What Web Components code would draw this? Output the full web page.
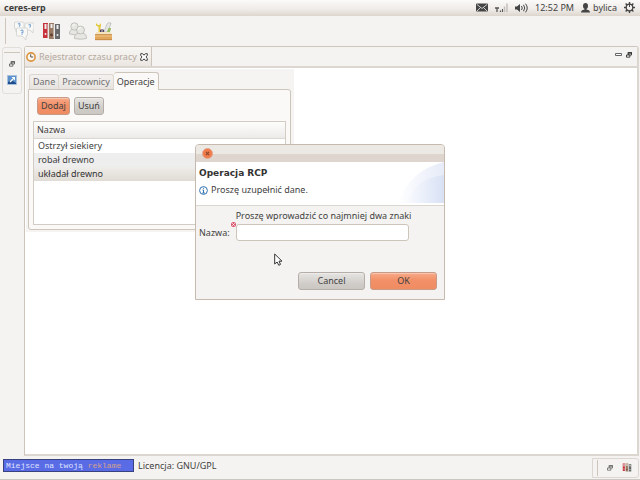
<!DOCTYPE html>
<html lang="pl">
<head>
<meta charset="utf-8">
<meta name="viewport" content="width=device-width, initial-scale=1">
<title>ceres-erp</title>
<style>
html,body{height:100%}
body{margin:0;background:#f4f3f1;color:#424242;font:9px/14px "Noto Sans","Open Sans",sans-serif;
--line:#cdc4ba;--soft:#dcd6d0;--accent:linear-gradient(#f8aa88,#f29068 45%,#f08c62);--plain:linear-gradient(#e6e4e1,#cfccc8 70%,#cbc7c3)}
</style>
</head>
<body>
<ceres-app></ceres-app>
<script>
const define = (name, html, setup) => customElements.define(name, class extends HTMLElement {
  constructor() {
    super();
    const t = document.createElement('template');
    t.innerHTML = '<style>*{box-sizing:border-box}:host{box-sizing:border-box}svg{display:block;flex:none}button,input{font:inherit;color:inherit;margin:0}button.bare{display:flex;align-items:center;border:0;padding:0;background:none}</style>' + html;
    this.attachShadow({mode: 'open'}).append(t.content.cloneNode(true));
  }
  connectedCallback() { if (setup) setup(this, this.shadowRoot); }
});

const binders = '<path d="M1 1h5v15H1z" fill="#c8323a"/><path d="M7 1h5v16H7z" fill="#9b7a63"/><path d="M13 2h5v15h-5z" fill="#68696a"/><path d="M2.500 2h2v5h-2zM8.500 2h2v4h-2zM14.500 3h2v4h-2z" fill="#eee"/><circle cx="3.500" cy="12" r="1" fill="#eee"/><circle cx="9.500" cy="13" r="1.400" fill="#5b4030"/><circle cx="15.500" cy="13" r="1" fill="#eee"/><path d="M6 2v14M12 2v14" stroke="#ddd"/>';
const icons = {
  chat: [20, 20, '<g fill="#f8f8f7" stroke="#cfd0ce" stroke-width=".8"><path d="M2 1h7q1 0 1 1v5q0 1-1 1H5L2 11V8Q.500 8 .500 7V2Q.500 1 2 1z"/><path d="M12 2h7q1 0 1 1v5q0 1-1 1v3l-3-3h-4q-1 0-1-1V3q0-1 1-1z"/><path d="M3.500 7h9q1 0 1 1v6q0 1-1 1H12v4l-4-4H3.500q-1 0-1-1V8q0-1 1-1z"/></g><g fill="none" stroke="#79a5d0" stroke-width="1.100"><path d="M4 3q2-1 2 .5T5 5.500M14.500 4q2-1 2 .5T15.500 6.500M6.500 9.500q3-1 2.500 1T8 12v.5M8 13.300v.8"/></g>'],
  binders: [19, 18, binders],
  people: [18, 18, '<g fill="#e6e6e3" stroke="#b8b8b4" stroke-width=".8"><path d="M.500 12q-.5-5 5.500-5t6 5q-6 1.500-11.500 0z"/><circle cx="5.500" cy="4.500" r="3.700"/><path d="M5.500 16.500q-.5-5.500 6-5.500t6 5.500q-6 1.500-12 0z"/><circle cx="11.500" cy="8" r="4"/></g><path d="M9.500 7.500q0-2 2-2M4 4q0-1.500 1.500-1.500" stroke="#fff" fill="none"/>'],
  tools: [18, 19, '<path d="M3.500 10V5L1 3.500V1L3 3h1.500L6 1v3L5.500 5v5z" fill="#e5c93d"/><path d="M9 10l3-8q1-2 4-1l-3 9z" fill="#e6e6e4" stroke="#aaa" stroke-width=".6"/><path d="M12 10l1.500-4h2.500l-1 4z" fill="#96b957"/><path d="M5 8q2-2 4 0v3H5z" fill="#54425d"/><path d="M7 7v4" stroke="#eee" stroke-width=".8"/><path d="M1.500 10h14l1.500 3H0z" fill="#f5e3bd"/><path d="M0 12.500h17V18H0z" fill="#e2a75c"/><path d="M0 12.700h17M0 17.700h17" stroke="#bc8340" stroke-width=".8"/><path d="M0 14h17" stroke="#f0c586"/>'],
  clock: [10, 10, '<circle cx="5" cy="5" r="4.100" fill="#fcf7ef" stroke="#dc9440" stroke-width="1.600"/><path d="M4.700 2.300V5H7.200" fill="none" stroke="#555"/>'],
  closeTab: [8, 8, '<path d="M.700.700h2L4 2.200 5.300.700h2v1.600L6 4l1.300 1.700v1.600h-2L4 5.800 2.700 7.300h-2V5.700L2 4 .700 2.300z" fill="#fff" stroke="#444" stroke-width="1"/>'],
  restore: [7, 7, '<path d="M2.500 1h4v2.500h-4z" fill="none" stroke="currentColor"/><path d="M2 1h5" stroke="currentColor" stroke-width="1.400"/><path d="M.500 3.500h4V6h-4z" fill="#fff" stroke="currentColor"/>'],
  minimize: [7, 4, '<path d="M.500 .500h6v2h-6z" fill="#fff" stroke="#666"/>'],
  shortcut: [10, 10, '<path d="M.500.500h9v9h-9z" fill="#5b90cc" stroke="#a9c0da"/><path d="M1 7l3-2 5 3v1H1z" fill="#1d4c8c"/><path d="M3 7l3-3" stroke="#fff" stroke-width="1.500"/><path d="M4.500 2H8v3.500z" fill="#fff"/>'],
  mail: [12, 9, '<rect y=".500" width="12" height="8" rx="1" fill="#454545"/><path d="M1 1.500l5 4 5-4M1 8l3.500-3.500M11 8L7.500 4.500" fill="none" stroke="#eee" stroke-width=".8"/>'],
  signal: [13, 10, '<path d="M0 5h4M2 5v4M5.500 7.500V9" stroke="#555" stroke-width="1.300"/><path d="M7.500 6v3" stroke="#555"/><path d="M9.500 3.500V9M12 .500V9" stroke="#c3c0bc" stroke-width="1.500"/>'],
  sound: [13, 10, '<path d="M0 3.500h2L5 1v8L2 6.500H0z" fill="#444"/><path d="M6.500 3q1.500 2 0 4M8.500 1.800q2.500 3.200 0 6.400M10.500 .700q3.500 4.300 0 8.600" stroke="#444" fill="none"/>'],
  user: [9, 10, '<ellipse cx="4.500" cy="3" rx="2.500" ry="3" fill="#444"/><path d="M3.500 5h2v1.500Q9 7 9 9.500H0Q0 7 3.500 6.500z" fill="#444"/>'],
  gear: [11, 11, '<circle cx="5.500" cy="5.500" r="3.300" fill="none" stroke="#444" stroke-width="1.200"/><path d="M5.500 0v2.500M5.500 8.500V11M0 5.500h2.500M8.500 5.500H11M1.600 1.600l1.700 1.700M7.700 7.700l1.700 1.700M9.400 1.600L7.700 3.300M3.300 7.700L1.600 9.400" stroke="#444" stroke-width="1.400"/><path d="M5.500 2v3" stroke="#444"/>'],
  info: [9, 9, '<circle cx="4.500" cy="4.500" r="3.900" fill="#fff" stroke="#3272ae"/><path d="M4.500 1.800v1M3.500 4h1v3M3.300 7h2.500" stroke="#3272ae" fill="none"/>'],
  error: [5, 5, '<circle cx="2.500" cy="2.500" r="2.500" fill="#d9546a"/><path d="M1.200 1.200l2.600 2.600M3.800 1.200L1.200 3.800" stroke="#fff" stroke-width=".8"/>'],
  closeWin: [11, 11, '<circle cx="5.500" cy="5.500" r="5" fill="#f07c4c" stroke="#dfa48c" stroke-width=".8"/><path d="M3.900 3.900l3.200 3.200M7.100 3.900L3.900 7.100" stroke="#8a4629" stroke-width="1.100"/>'],
  cursor: [9, 13, '<path d="M.700 1v10l2.400-2 1.700 3.300 1.700-.9L5 8.200h3z" fill="#fff" stroke="#333"/>']
};
define('ui-icon', '<style>:host{display:inline-block;flex:none}</style>', (el, root) => {
  if (root.querySelector('svg')) return;
  const [w, h, body] = icons[el.getAttribute('name')];
  const width = el.getAttribute('width') || w;
  root.innerHTML += `<svg width="${width}" height="${Math.round(h * width / w)}" viewBox="0 0 ${w} ${h}" aria-hidden="true">${body}</svg>`;
});

define('ui-button', `<style>
:host{display:inline-flex}
button{width:100%;height:18px;padding:0 3px;line-height:14px;border:1px solid #b5aea8;border-radius:3px;background:var(--plain);box-shadow:inset 0 1px #ffffff55}
:host([primary]) button{background:var(--accent);border-color:#c69a86}
</style><button type="button"><slot></slot></button>`);

define('top-panel', `<style>
:host{display:flex;align-items:center;height:16px;padding:0 5px 1px 4px;background:linear-gradient(#fbfaf9,#eeebe7 60%,#ddd5ce)}
b{flex:1;color:#3c3c3c}
nav{display:flex;align-items:center;gap:7px}
button.bare{gap:3px;line-height:14px}
</style><b>ceres-erp</b><nav>
<button class="bare" aria-label="Mail"><ui-icon name="mail"></ui-icon></button>
<button class="bare" aria-label="Network"><ui-icon name="signal"></ui-icon></button>
<button class="bare" aria-label="Sound"><ui-icon name="sound"></ui-icon></button>
<button class="bare">12:52 PM</button>
<button class="bare"><ui-icon name="user"></ui-icon>bylica</button>
<button class="bare" aria-label="System"><ui-icon name="gear"></ui-icon></button></nav>`);

define('tool-bar', `<style>
:host{display:flex;align-items:center;gap:8px;height:30px;padding:0 5px}
i{width:1px;height:26px;background:var(--line)}
</style><i></i>
<button class="bare" aria-label="Pomoc"><ui-icon name="chat"></ui-icon></button>
<button class="bare" aria-label="Dokumenty"><ui-icon name="binders"></ui-icon></button>
<button class="bare" aria-label="Pracownicy"><ui-icon name="people"></ui-icon></button>
<button class="bare" aria-label="Narzędzia"><ui-icon name="tools"></ui-icon></button>`);

define('fast-views', `<style>
:host{display:block;padding:1px 2px}
div{display:flex;flex-direction:column;align-items:center;gap:8px;height:47px;padding-top:4px;border:1px solid #e2ded9;border-radius:3px}
i{width:16px;height:1px;background:var(--line)}
button{color:#555}
</style><div><i></i><button class="bare" aria-label="Restore"><ui-icon name="restore" width="6"></ui-icon></button>
<button class="bare" aria-label="Rejestrator"><ui-icon name="shortcut"></ui-icon></button></div>`);

define('view-part', `<style>
:host{display:flex;flex-direction:column;border:1px solid var(--line);border-width:1px 2px 2px 1px;border-radius:3px 3px 0 0;border-bottom-color:var(--soft);border-right-color:var(--soft);background:#fff}
header{display:flex;justify-content:space-between;height:21px;background:#f4f3f1;border-bottom:2px solid var(--soft)}
.tab{display:flex;align-items:center;gap:3px;padding:0 3px 0 1px;border-right:1px solid var(--line);background:linear-gradient(#f8f7f5,#ebe6e1);color:#b4a99e}
.tools{display:flex;gap:4px;padding:4px 5px 0 0;color:#222}
.tools button{height:8px}
main{flex:1;padding:1px}
</style><header><div class="tab"><ui-icon name="clock"></ui-icon><slot name="title"></slot><button class="bare" aria-label="Zamknij"><ui-icon name="closeTab"></ui-icon></button></div>
<div class="tools"><button class="bare" aria-label="Minimize"><ui-icon name="minimize"></ui-icon></button><button class="bare" aria-label="Restore"><ui-icon name="restore" width="6"></ui-icon></button></div></header><main><slot></slot></main>`);

define('tab-folder', `<style>
:host{display:block;width:268px;padding:3px 3px 2px 2px;background:#f5f4f2}
nav{display:flex;align-items:flex-end;padding-left:1px}
button{height:15px;padding:0 3px;line-height:14px;border:1px solid var(--soft);border-bottom:0;border-radius:3px 3px 0 0;background:linear-gradient(#f4f2f0,#e6e3df);color:#707070}
button+button{border-left:0}
button[aria-selected=true]{height:18px;margin-bottom:-1px;background:#faf9f7;border-color:var(--line);color:#444;position:relative}
section{padding:7px 4px 4px;border:1px solid var(--line);border-radius:0 3px 3px 3px;background:#faf9f7}
</style><nav role="tablist"><button role="tab">Dane</button><button role="tab">Pracownicy</button><button role="tab" aria-selected="true">Operacje</button></nav><section><slot></slot></section>`);

define('operations-panel', `<style>
:host{display:block}
.actions{display:flex;gap:4px;padding:0 4px 6px}
.frame{height:104px;border:1px solid #d3ccc5;background:#fff}
table{width:100%;border-collapse:collapse}
th,td{padding:0 4px;height:14px;line-height:14px;text-align:left;font-weight:400}
th{height:16px;padding:0 3px;background:linear-gradient(#fdfdfc,#edebe9);border-bottom:1px solid var(--soft)}
tr:nth-child(2) td{background:#eee}
tr.sel td{background:linear-gradient(#efedea,#e0dbd5);color:#333}
</style><div class="actions"><ui-button primary>Dodaj</ui-button><ui-button>Usuń</ui-button></div>
<div class="frame"><table><thead><tr><th scope="col">Nazwa</th></tr></thead><tbody><tr><td>Ostrzył siekiery</td></tr><tr><td>robał drewno</td></tr><tr class="sel"><td>układał drewno</td></tr></tbody></table></div>`);

define('status-line', `<style>
:host{display:flex;align-items:center;justify-content:space-between;height:24px;padding:0 1px 0 3px;border-bottom:1px solid #cbc7c2}
.left{display:flex;align-items:center;gap:4px;padding-bottom:4px}
a{display:block;width:131px;height:13px;padding:0 2px;border:1px solid #38427e;background:#5a6be6;color:#dfe3ff;font:8px/11px "Liberation Mono",monospace;text-decoration:none;white-space:nowrap}
a span{color:#d3a08c}
.right{display:flex;align-items:center;gap:9px;height:20px;padding:0 6px 0 4px;border:1px solid var(--soft);border-radius:0 3px 3px 0;color:#666}
i{width:1px;height:16px;background:var(--line)}
</style><div class="left"><a href="#">Miejsce na twoją <span>reklame</span></a><span>Licencja: GNU/GPL</span></div>
<div class="right"><i></i><button class="bare" aria-label="Restore"><ui-icon name="restore" width="6"></ui-icon></button><button class="bare" aria-label="Dokumenty"><ui-icon name="binders" width="10"></ui-icon></button></div>`);

define('operation-dialog', `<style>
:host{display:block;width:250px;background:#f4f3f1;border:1px solid #c6b9ad;border-radius:4px 4px 0 0;overflow:hidden;position:relative}
.bar{display:flex;align-items:center;height:17px;padding-left:6px;background:linear-gradient(#ece8e3 50%,#ddd5ce 50%)}
header{display:flex;height:44px;background:#fff;border-bottom:1px solid var(--soft);justify-content:space-between}
h1{margin:4px 0 3px;font:bold 9px/14px "DejaVu Sans",sans-serif;color:#333}
.head{padding-left:3px}
p{display:flex;align-items:center;gap:3px;margin:0}
form{display:grid;grid-template-columns:auto 1fr;gap:1px 6px;padding:3px 35px 0 3px;align-items:center}
.hint{grid-column:2;white-space:nowrap}
.field{display:flex;position:relative;margin-right:2px}
input{width:100%;height:17px;padding:0 3px;border:1px solid var(--line);border-radius:3px;background:#fff;outline:0}
.field ui-icon{position:absolute;left:-5px;top:-2px}
footer{display:flex;justify-content:flex-end;gap:5px;padding:31px 7px 9px}
footer ui-button{width:67px}
.pointer{position:absolute;left:78px;top:108px}
</style><div class="bar"><button class="bare" aria-label="Zamknij"><ui-icon name="closeWin"></ui-icon></button></div>
<header><div class="head"><h1>Operacja RCP</h1><p><ui-icon name="info"></ui-icon>Proszę uzupełnić dane.</p></div>
<svg width="46" height="41" viewBox="0 0 46 41" aria-hidden="true"><defs><linearGradient id="a"><stop stop-color="#fff"/><stop offset="1" stop-color="#e6ebf8"/></linearGradient><linearGradient id="b"><stop stop-color="#fafbfe"/><stop offset="1" stop-color="#d8e1f5"/></linearGradient></defs><path d="M0 41Q12 8 46 0v41z" fill="url(#a)"/><path d="M8 41Q19 15 46 13v28z" fill="url(#b)"/></svg></header>
<form><label class="hint" for="name">Proszę wprowadzić co najmniej dwa znaki</label><label for="name">Nazwa:</label><div class="field"><input id="name" type="text"><ui-icon name="error"></ui-icon></div></form>
<footer><ui-button>Cancel</ui-button><ui-button primary>OK</ui-button></footer>
<ui-icon class="pointer" name="cursor"></ui-icon>`);

define('ceres-app', `<style>
:host{display:flex;flex-direction:column;min-height:100%;position:relative}
.work{flex:1;display:grid;grid-template-columns:24px 1fr;padding-right:1px}
.overlay{position:absolute;inset:0;display:flex;align-items:center;justify-content:center;padding-bottom:36px}
</style><top-panel></top-panel><tool-bar></tool-bar>
<div class="work"><fast-views></fast-views><view-part><span slot="title">Rejestrator czasu pracy</span><tab-folder><operations-panel></operations-panel></tab-folder></view-part></div>
<status-line></status-line><div class="overlay"><operation-dialog role="dialog" aria-label="Operacja RCP"></operation-dialog></div>`);
</script>
</body>
</html>
